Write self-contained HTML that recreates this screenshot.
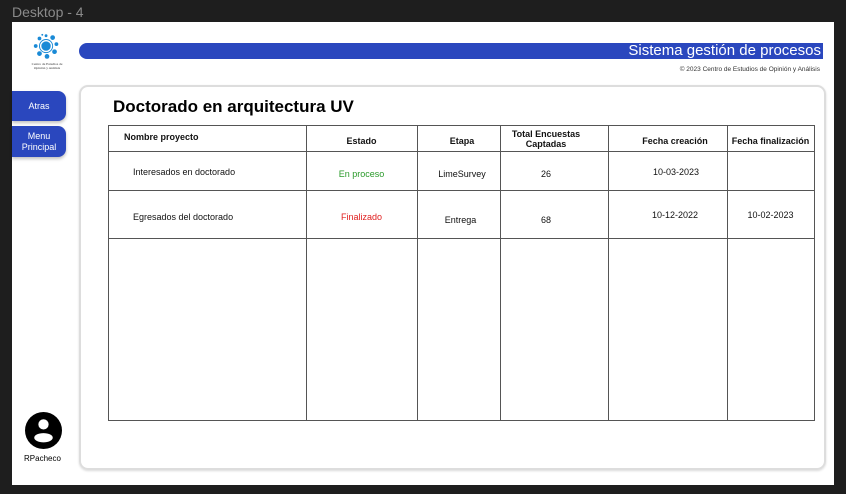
<!DOCTYPE html>
<html><head><meta charset="utf-8"><style>
*{margin:0;padding:0;box-sizing:border-box}
body{width:846px;height:494px;background:#1e1e1e;position:relative;overflow:hidden;font-family:"Liberation Sans",sans-serif}
.a{position:absolute}
.frame{left:12px;top:22px;width:822px;height:463px;background:#fff}
.title{left:12px;top:4px;color:#8a8a8a;font-size:14px}
.bar{left:79px;top:43px;width:744px;height:16px;background:#2a47be;border-radius:8px 0 0 8px;color:#fff;font-size:15px;text-align:right;padding-right:2px;line-height:16px}
.copy{right:26px;top:66px;font-size:6.5px;color:#333}
.btn{left:12px;width:54px;background:#2a47be;color:#fff;font-size:9px;text-align:center;border-radius:0 8px 8px 0;box-shadow:0 2px 3px rgba(0,0,0,.25);display:flex;align-items:center;justify-content:center;line-height:11px}
.panel{left:79px;top:85px;width:747px;height:385px;border:2px solid #ddd;border-radius:9px;box-shadow:0 1px 2px rgba(0,0,0,.15)}
h1{position:absolute;left:113px;top:97px;font-size:17px;font-weight:bold;color:#000}
.vl{position:absolute;top:125px;width:1px;height:296px;background:#555}
.hl{position:absolute;left:108px;width:707px;height:1px;background:#555}
.t{position:absolute;font-size:9px;color:#111;text-align:center}
.b{font-weight:bold}
</style></head><body>
<div class="a title">Desktop - 4</div>
<div class="a frame"></div>
<svg class="a" style="left:31px;top:32px" width="32" height="30" viewBox="0 0 34 30">
<g fill="#1a8ad6"><circle cx="16" cy="14" r="5"/><circle cx="16" cy="14" r="7" fill="none" stroke="#1a8ad6" stroke-width="1"/>
<circle cx="9" cy="6" r="2"/><circle cx="16" cy="3" r="1.5"/><circle cx="23" cy="5" r="2.5"/><circle cx="27" cy="12" r="2"/><circle cx="25" cy="20" r="2.5"/><circle cx="17" cy="25" r="2.5"/><circle cx="9" cy="22" r="2.5"/><circle cx="5" cy="14" r="2"/><circle cx="12" cy="2" r="1"/></g>
</svg>
<div class="a" style="left:28px;top:62px;width:38px;font-size:3.5px;text-align:center;color:#333;font-family:'Liberation Serif',serif">Centro de Estudios de Opinión y Análisis</div>
<div class="a bar">Sistema gestión de procesos</div>
<div class="a copy">© 2023 Centro de Estudios de Opinión y Análisis</div>
<div class="a btn" style="top:91px;height:30px">Atras</div>
<div class="a btn" style="top:126px;height:31px">Menu<br>Principal</div>
<svg class="a" style="left:25px;top:412px" width="37" height="37" viewBox="0 0 36 36"><circle cx="18" cy="18" r="18" fill="#000"/><circle cx="18" cy="12" r="5" fill="#fff"/><ellipse cx="18" cy="25" rx="9" ry="4.5" fill="#fff"/></svg>
<div class="a" style="left:24px;top:454px;font-size:8px;color:#000">RPacheco</div>
<div class="a panel"></div>
<h1>Doctorado en arquitectura UV</h1>
<div class="hl" style="top:125px"></div><div class="hl" style="top:151px"></div><div class="hl" style="top:190px"></div><div class="hl" style="top:238px"></div><div class="hl" style="top:420px"></div>
<div class="vl" style="left:108px"></div><div class="vl" style="left:306px"></div><div class="vl" style="left:417px"></div><div class="vl" style="left:500px"></div><div class="vl" style="left:608px"></div><div class="vl" style="left:727px"></div><div class="vl" style="left:814px"></div>
<div class="t b" style="left:124px;top:132px">Nombre proyecto</div>
<div class="t b" style="left:306px;width:111px;top:136px">Estado</div>
<div class="t b" style="left:417px;width:90px;top:136px">Etapa</div>
<div class="t b" style="left:500px;width:92px;top:129px;line-height:10px">Total Encuestas<br>Captadas</div>
<div class="t b" style="left:630px;width:90px;top:136px">Fecha creación</div>
<div class="t b" style="left:727px;width:87px;top:136px">Fecha finalización</div>
<div class="t" style="left:133px;top:167px">Interesados en doctorado</div>
<div class="t" style="left:306px;width:111px;top:169px;color:#2a9a2a">En proceso</div>
<div class="t" style="left:417px;width:90px;top:169px">LimeSurvey</div>
<div class="t" style="left:500px;width:92px;top:169px">26</div>
<div class="t" style="left:631px;width:90px;top:167px">10-03-2023</div>
<div class="t" style="left:133px;top:212px">Egresados del doctorado</div>
<div class="t" style="left:306px;width:111px;top:212px;color:#e02020">Finalizado</div>
<div class="t" style="left:417px;width:87px;top:215px">Entrega</div>
<div class="t" style="left:500px;width:92px;top:215px">68</div>
<div class="t" style="left:630px;width:90px;top:210px">10-12-2022</div>
<div class="t" style="left:727px;width:87px;top:210px">10-02-2023</div>
</body></html>
